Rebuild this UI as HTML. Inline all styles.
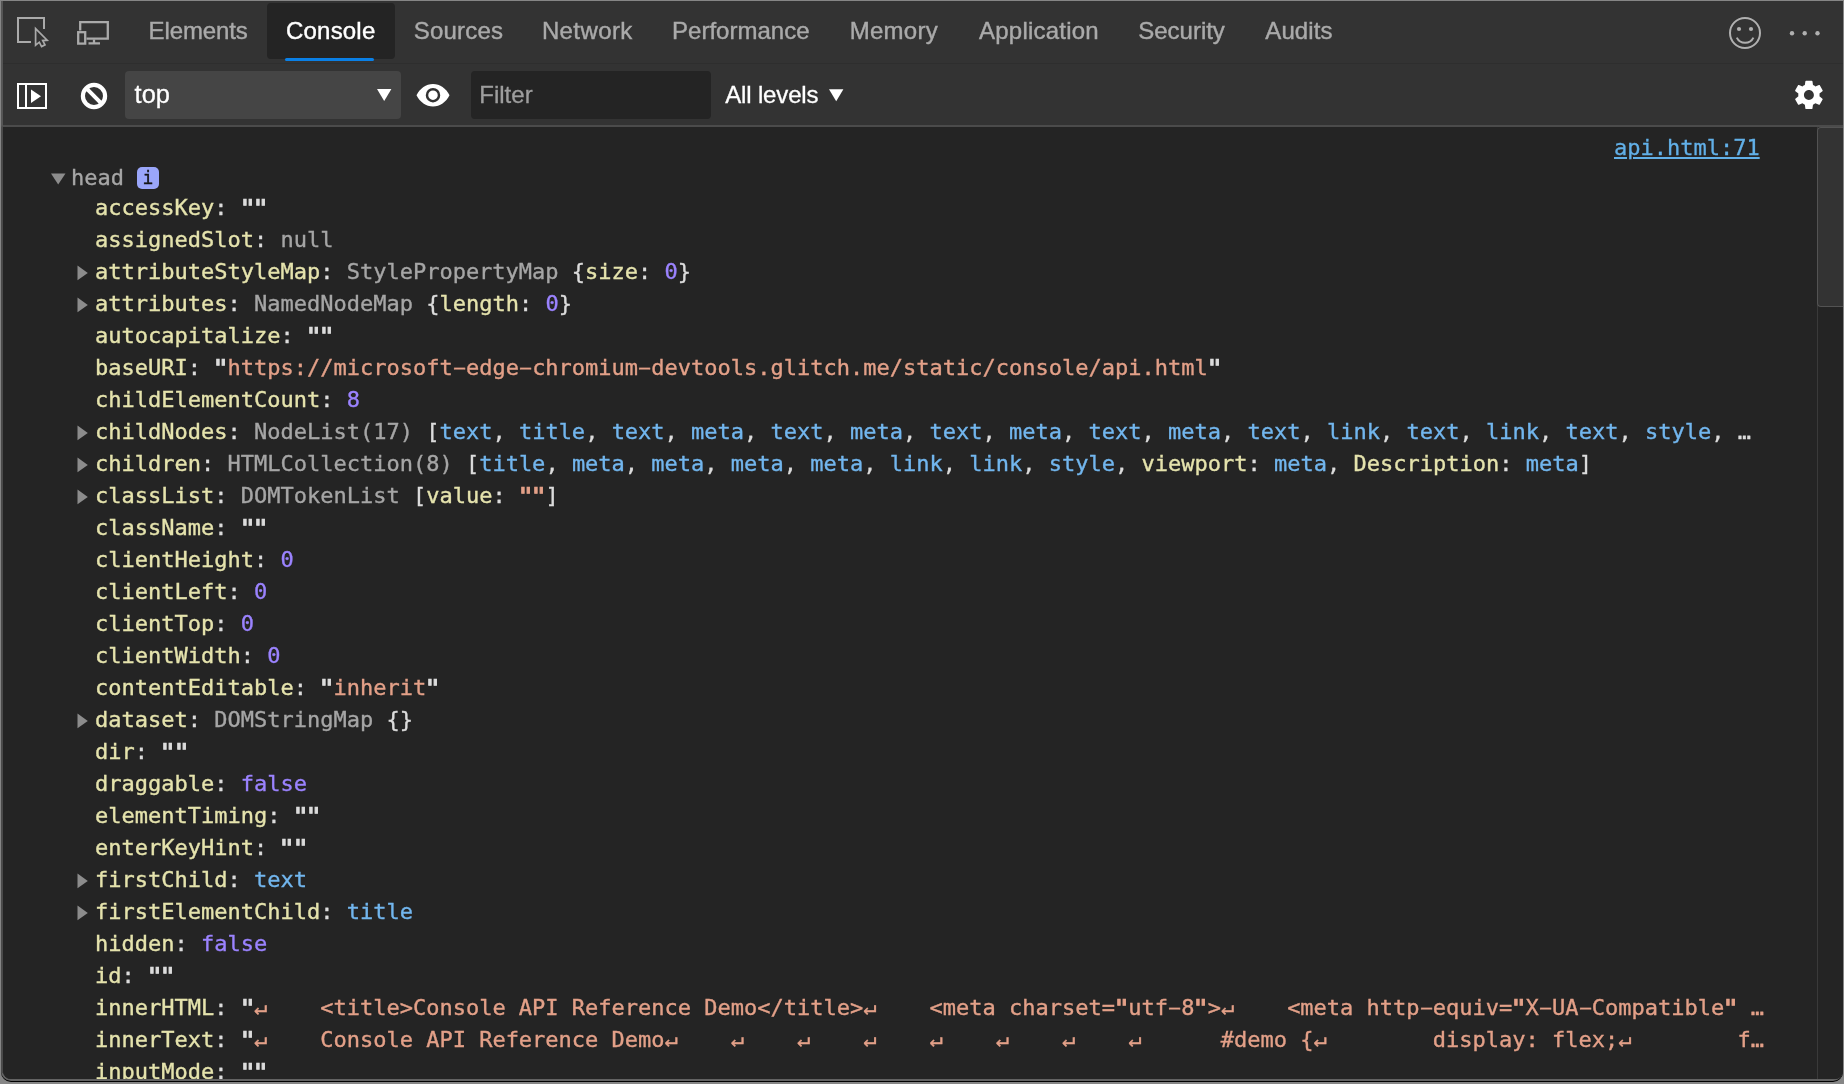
<!DOCTYPE html>
<html lang="en">
<head>
<meta charset="utf-8">
<title>DevTools Console</title>
<style>
html,body{margin:0;padding:0;}
body{width:1844px;height:1084px;overflow:hidden;background:#868686;position:relative;font-family:"Liberation Sans",sans-serif;}
#shadow{position:absolute;left:1px;top:1px;width:1842px;height:1081px;background:#000;border-radius:0 0 10px 10px;}
#edge{position:absolute;left:1px;top:1px;width:1842px;height:1080px;background:#626262;border-radius:0 0 10px 10px;}
#ledge{position:absolute;left:1px;top:1px;width:2px;height:1072px;background:linear-gradient(#555 0,#555 125px,#4a4a4a 126px,#4a4a4a 100%);}
#win{position:absolute;left:3px;top:1px;width:1840px;height:1078px;background:#242424;border-radius:0 0 8px 8px;overflow:hidden;}
#pg{position:absolute;left:-3px;top:-1px;width:1844px;height:1084px;will-change:transform;}
#tabbar{position:absolute;left:0;top:0;width:1844px;height:63px;background:#333;}
#tabline{position:absolute;left:0;top:63px;width:1844px;height:7px;background:linear-gradient(#2d2d2d,#303030 20%,#333 100%);}
#toolbar{position:absolute;left:0;top:64px;width:1844px;height:61px;background:#333;}
#toolline{position:absolute;left:0;top:125px;width:1844px;height:2px;background:#4b4b4b;}
#console{position:absolute;left:0;top:127px;width:1844px;height:960px;background:#242424;}
.tab{position:absolute;top:17px;height:28px;line-height:28px;font-size:24px;color:#aaa;white-space:nowrap;-webkit-text-stroke:0.4px;}
#seltab{position:absolute;left:267px;top:3px;width:128px;height:56px;background:#242424;border-radius:4px;}
#selline{position:absolute;left:285px;top:58px;width:88.5px;height:3px;background:#0a80e6;border-radius:1.5px;}
.ui{position:absolute;font-size:24px;line-height:28px;height:28px;white-space:nowrap;color:#fff;-webkit-text-stroke:0.3px;}
#ctx{position:absolute;left:125px;top:71px;width:276px;height:48px;background:#454545;border-radius:4px;}
#filter{position:absolute;left:471px;top:71px;width:240px;height:48px;background:#242424;border-radius:4px;}
#icons{position:absolute;left:0;top:0;width:1844px;height:1084px;}
.r{position:absolute;left:95px;height:32px;line-height:32px;font-family:"DejaVu Sans Mono","Liberation Mono",monospace;font-size:22px;white-space:pre;color:#dcdcdc;-webkit-text-stroke:0.35px;}
.n{color:#e5e3ad;}
.c{color:#a6a6a6;}
.p{color:#dcdcdc;}
.v{color:#9b83ff;}
.s{color:#e3a088;}
.t{color:#72b6ee;}
.g{color:#a5a5a5;}
.h{display:inline-block;transform:translateY(-1px) scale(1.9,0.8);}
.q{display:inline-block;-webkit-text-stroke:0.7px;transform:scale(1.3,1.06);transform-origin:50% 32%;}
#src{position:absolute;left:1614px;top:132px;-webkit-text-stroke:0.3px;height:32px;line-height:32px;font-family:"DejaVu Sans Mono","Liberation Mono",monospace;font-size:22px;color:#62b0e8;text-decoration:underline;white-space:pre;}
#badge{position:absolute;left:137px;top:167px;width:22px;height:22px;border-radius:5px;background:#9aa6fa;color:#151515;font-family:"DejaVu Sans Mono","Liberation Mono",monospace;font-size:18px;line-height:21px;text-align:center;-webkit-text-stroke:0.3px;}
#sbline{position:absolute;left:1817px;top:127px;width:1px;height:960px;background:#3a3a3a;}
#thumb{position:absolute;left:1817px;top:127px;width:26px;height:180px;box-sizing:border-box;background:#333;border:1px solid #535353;border-right:none;border-radius:4px 0 0 4px;}
</style>
</head>
<body>
<div id="shadow"></div>
<div id="edge"></div>
<div id="ledge"></div>
<div id="win"><div id="pg">
<div id="tabbar"></div>
<div id="tabline"></div>
<div id="toolbar"></div>
<div id="toolline"></div>
<div id="console"></div>
<div id="seltab"></div>
<div id="selline"></div>
<div class="tab" style="left:148.5px;letter-spacing:-0.1px;">Elements</div>
<div class="tab" style="left:286.0px;letter-spacing:0.2px;color:#fff;">Console</div>
<div class="tab" style="left:413.8px;letter-spacing:0.2px;">Sources</div>
<div class="tab" style="left:541.9px;letter-spacing:0.4px;">Network</div>
<div class="tab" style="left:672.1px;letter-spacing:0.0px;">Performance</div>
<div class="tab" style="left:849.7px;letter-spacing:0.26px;">Memory</div>
<div class="tab" style="left:979.0px;letter-spacing:0.23px;">Application</div>
<div class="tab" style="left:1138.3px;letter-spacing:-0.02px;">Security</div>
<div class="tab" style="left:1265.3px;letter-spacing:0.1px;">Audits</div>
<div id="ctx"></div>
<div id="filter"></div>
<div class="ui" style="left:134.6px;top:80px;font-size:25.4px">top</div>
<div class="ui" style="left:479.3px;top:81px;color:#9e9e9e">Filter</div>
<div class="ui" style="left:725.2px;top:81px;letter-spacing:-0.15px">All levels</div>
<div id="src">api.html:71</div>
<div class="r" style="left:71px;top:162px"><span class="c">head</span></div>
<div id="badge">i</div>
<div class="r" style="top:192px"><span class="n">accessKey</span>: <span class="q">&quot;</span><span class="q">&quot;</span></div>
<div class="r" style="top:224px"><span class="n">assignedSlot</span>: <span class="g">null</span></div>
<div class="r" style="top:256px"><span class="n">attributeStyleMap</span>: <span class="c">StylePropertyMap</span> {<span class="n">size</span>: <span class="v">0</span>}</div>
<div class="r" style="top:288px"><span class="n">attributes</span>: <span class="c">NamedNodeMap</span> {<span class="n">length</span>: <span class="v">0</span>}</div>
<div class="r" style="top:320px"><span class="n">autocapitalize</span>: <span class="q">&quot;</span><span class="q">&quot;</span></div>
<div class="r" style="top:352px"><span class="n">baseURI</span>: <span class="q">&quot;</span><span class="s">https://microsoft<span class="h">-</span>edge<span class="h">-</span>chromium<span class="h">-</span>devtools.glitch.me/static/console/api.html</span><span class="q">&quot;</span></div>
<div class="r" style="top:384px"><span class="n">childElementCount</span>: <span class="v">8</span></div>
<div class="r" style="top:416px"><span class="n">childNodes</span>: <span class="c">NodeList(17)</span> [<span class="t">text</span>, <span class="t">title</span>, <span class="t">text</span>, <span class="t">meta</span>, <span class="t">text</span>, <span class="t">meta</span>, <span class="t">text</span>, <span class="t">meta</span>, <span class="t">text</span>, <span class="t">meta</span>, <span class="t">text</span>, <span class="t">link</span>, <span class="t">text</span>, <span class="t">link</span>, <span class="t">text</span>, <span class="t">style</span>, …</div>
<div class="r" style="top:448px"><span class="n">children</span>: <span class="c">HTMLCollection(8)</span> [<span class="t">title</span>, <span class="t">meta</span>, <span class="t">meta</span>, <span class="t">meta</span>, <span class="t">meta</span>, <span class="t">link</span>, <span class="t">link</span>, <span class="t">style</span>, <span class="n">viewport</span>: <span class="t">meta</span>, <span class="n">Description</span>: <span class="t">meta</span>]</div>
<div class="r" style="top:480px"><span class="n">classList</span>: <span class="c">DOMTokenList</span> [<span class="n">value</span>: <span class="s"><span class="q">&quot;</span><span class="q">&quot;</span></span>]</div>
<div class="r" style="top:512px"><span class="n">className</span>: <span class="q">&quot;</span><span class="q">&quot;</span></div>
<div class="r" style="top:544px"><span class="n">clientHeight</span>: <span class="v">0</span></div>
<div class="r" style="top:576px"><span class="n">clientLeft</span>: <span class="v">0</span></div>
<div class="r" style="top:608px"><span class="n">clientTop</span>: <span class="v">0</span></div>
<div class="r" style="top:640px"><span class="n">clientWidth</span>: <span class="v">0</span></div>
<div class="r" style="top:672px"><span class="n">contentEditable</span>: <span class="q">&quot;</span><span class="s">inherit</span><span class="q">&quot;</span></div>
<div class="r" style="top:704px"><span class="n">dataset</span>: <span class="c">DOMStringMap</span> {}</div>
<div class="r" style="top:736px"><span class="n">dir</span>: <span class="q">&quot;</span><span class="q">&quot;</span></div>
<div class="r" style="top:768px"><span class="n">draggable</span>: <span class="v">false</span></div>
<div class="r" style="top:800px"><span class="n">elementTiming</span>: <span class="q">&quot;</span><span class="q">&quot;</span></div>
<div class="r" style="top:832px"><span class="n">enterKeyHint</span>: <span class="q">&quot;</span><span class="q">&quot;</span></div>
<div class="r" style="top:864px"><span class="n">firstChild</span>: <span class="t">text</span></div>
<div class="r" style="top:896px"><span class="n">firstElementChild</span>: <span class="t">title</span></div>
<div class="r" style="top:928px"><span class="n">hidden</span>: <span class="v">false</span></div>
<div class="r" style="top:960px"><span class="n">id</span>: <span class="q">&quot;</span><span class="q">&quot;</span></div>
<div class="r" style="top:992px"><span class="n">innerHTML</span>: <span class="q">&quot;</span><span class="s">↵    &lt;title&gt;Console API Reference Demo&lt;/title&gt;↵    &lt;meta charset=<span class="q">&quot;</span>utf<span class="h">-</span>8<span class="q">&quot;</span>&gt;↵    &lt;meta http<span class="h">-</span>equiv=<span class="q">&quot;</span>X<span class="h">-</span>UA<span class="h">-</span>Compatible<span class="q">&quot;</span> …</span></div>
<div class="r" style="top:1024px"><span class="n">innerText</span>: <span class="q">&quot;</span><span class="s">↵    Console API Reference Demo↵    ↵    ↵    ↵    ↵    ↵    ↵    ↵      #demo {↵        display: flex;↵        f…</span></div>
<div class="r" style="top:1056px"><span class="n">inputMode</span>: <span class="q">&quot;</span><span class="q">&quot;</span></div>
<div id="sbline"></div>
<div id="thumb"></div>
<svg id="icons" width="1844" height="1084" viewBox="0 0 1844 1084">
<!-- inspect -->
<path d="M31 42H18V18H44V29" fill="none" stroke="#aaa" stroke-width="2"/>
<path d="M35.6 28.6V45.2L39.3 42.2L41.6 46.6L45 44.8L42.7 40.6L47.2 40.2Z" fill="none" stroke="#aaa" stroke-width="1.7" stroke-linejoin="miter"/>
<!-- device -->
<path d="M80.2 30.5V22.2H107.8V38.6H86.5" fill="none" stroke="#aaa" stroke-width="2.3"/>
<rect x="78.2" y="32.2" width="7" height="11.4" fill="none" stroke="#aaa" stroke-width="2.3"/>
<path d="M94 39.5V43.4M88.5 43.4H100" fill="none" stroke="#aaa" stroke-width="2.3"/>
<!-- smiley -->
<circle cx="1745" cy="33" r="15" fill="none" stroke="#b0b0b0" stroke-width="2"/>
<circle cx="1739" cy="29" r="2.1" fill="#b0b0b0"/><circle cx="1751" cy="29" r="2.1" fill="#b0b0b0"/>
<path d="M1736.8 37.6A9.2 9.2 0 0 0 1753.4 37.6" fill="none" stroke="#b0b0b0" stroke-width="2"/>
<!-- dots -->
<circle cx="1792" cy="33.2" r="2.2" fill="#b0b0b0"/><circle cx="1804.7" cy="33.2" r="2.2" fill="#b0b0b0"/><circle cx="1817.5" cy="33.2" r="2.2" fill="#b0b0b0"/>
<!-- sidebar toggle -->
<rect x="18" y="84" width="28" height="24" fill="none" stroke="#fff" stroke-width="2"/>
<path d="M26 84V108" stroke="#fff" stroke-width="2"/>
<path d="M31 89.5V103L41 96.2Z" fill="#fff"/>
<!-- clear -->
<circle cx="94" cy="96" r="11.1" fill="none" stroke="#fff" stroke-width="4.2"/>
<path d="M86.2 88.2L101.8 103.8" stroke="#fff" stroke-width="4"/>
<!-- select arrow -->
<path d="M377 89H391.4L384.2 101Z" fill="#fff"/>
<!-- eye -->
<path d="M416.5 95.2C420 88.5 426 84 433 84S446 88.5 449.5 95.2C446 102 440 106.5 433 106.5S420 102 416.5 95.2Z" fill="#fff"/>
<circle cx="433" cy="95.2" r="6" fill="none" stroke="#323232" stroke-width="2.5"/>
<!-- levels arrow -->
<path d="M829 89.3H843.4L836.2 101.3Z" fill="#fff"/>
<!-- gear -->
<g transform="translate(1791.9 77.9) scale(1.418)"><path fill="#fff" d="M19.43 12.98c.04-.32.07-.64.07-.98s-.03-.66-.07-.98l2.11-1.65c.19-.15.24-.42.12-.64l-2-3.46c-.12-.22-.39-.3-.61-.22l-2.49 1c-.52-.4-1.08-.73-1.69-.98l-.38-2.65C14.46 2.18 14.25 2 14 2h-4c-.25 0-.46.18-.49.42l-.38 2.65c-.61.25-1.17.59-1.69.98l-2.49-1c-.23-.09-.49 0-.61.22l-2 3.46c-.13.22-.07.49.12.64l2.11 1.65c-.04.32-.07.65-.07.98s.03.66.07.98l-2.11 1.65c-.19.15-.24.42-.12.64l2 3.46c.12.22.39.3.61.22l2.49-1c.52.4 1.08.73 1.69.98l.38 2.65c.03.24.24.42.49.42h4c.25 0 .46-.18.49-.42l.38-2.65c.61-.25 1.17-.59 1.69-.98l2.49 1c.23.09.49 0 .61-.22l2-3.46c.12-.22.07-.49-.12-.64l-2.11-1.65zM12 15.5c-1.93 0-3.5-1.57-3.5-3.5s1.57-3.5 3.5-3.5 3.5 1.57 3.5 3.5-1.57 3.5-3.5 3.5z"/></g>
<path d="M51 173.5H65.5L58.2 184.5Z" fill="#8c8c8c"/>
<path d="M77.5 265.59999999999997V280.2L87.8 272.9Z" fill="#8c8c8c"/>
<path d="M77.5 297.59999999999997V312.2L87.8 304.9Z" fill="#8c8c8c"/>
<path d="M77.5 425.59999999999997V440.2L87.8 432.9Z" fill="#8c8c8c"/>
<path d="M77.5 457.59999999999997V472.2L87.8 464.9Z" fill="#8c8c8c"/>
<path d="M77.5 489.59999999999997V504.2L87.8 496.9Z" fill="#8c8c8c"/>
<path d="M77.5 713.6V728.1999999999999L87.8 720.9Z" fill="#8c8c8c"/>
<path d="M77.5 873.6V888.1999999999999L87.8 880.9Z" fill="#8c8c8c"/>
<path d="M77.5 905.6V920.1999999999999L87.8 912.9Z" fill="#8c8c8c"/>
</svg>

</div></div>
</body>
</html>
